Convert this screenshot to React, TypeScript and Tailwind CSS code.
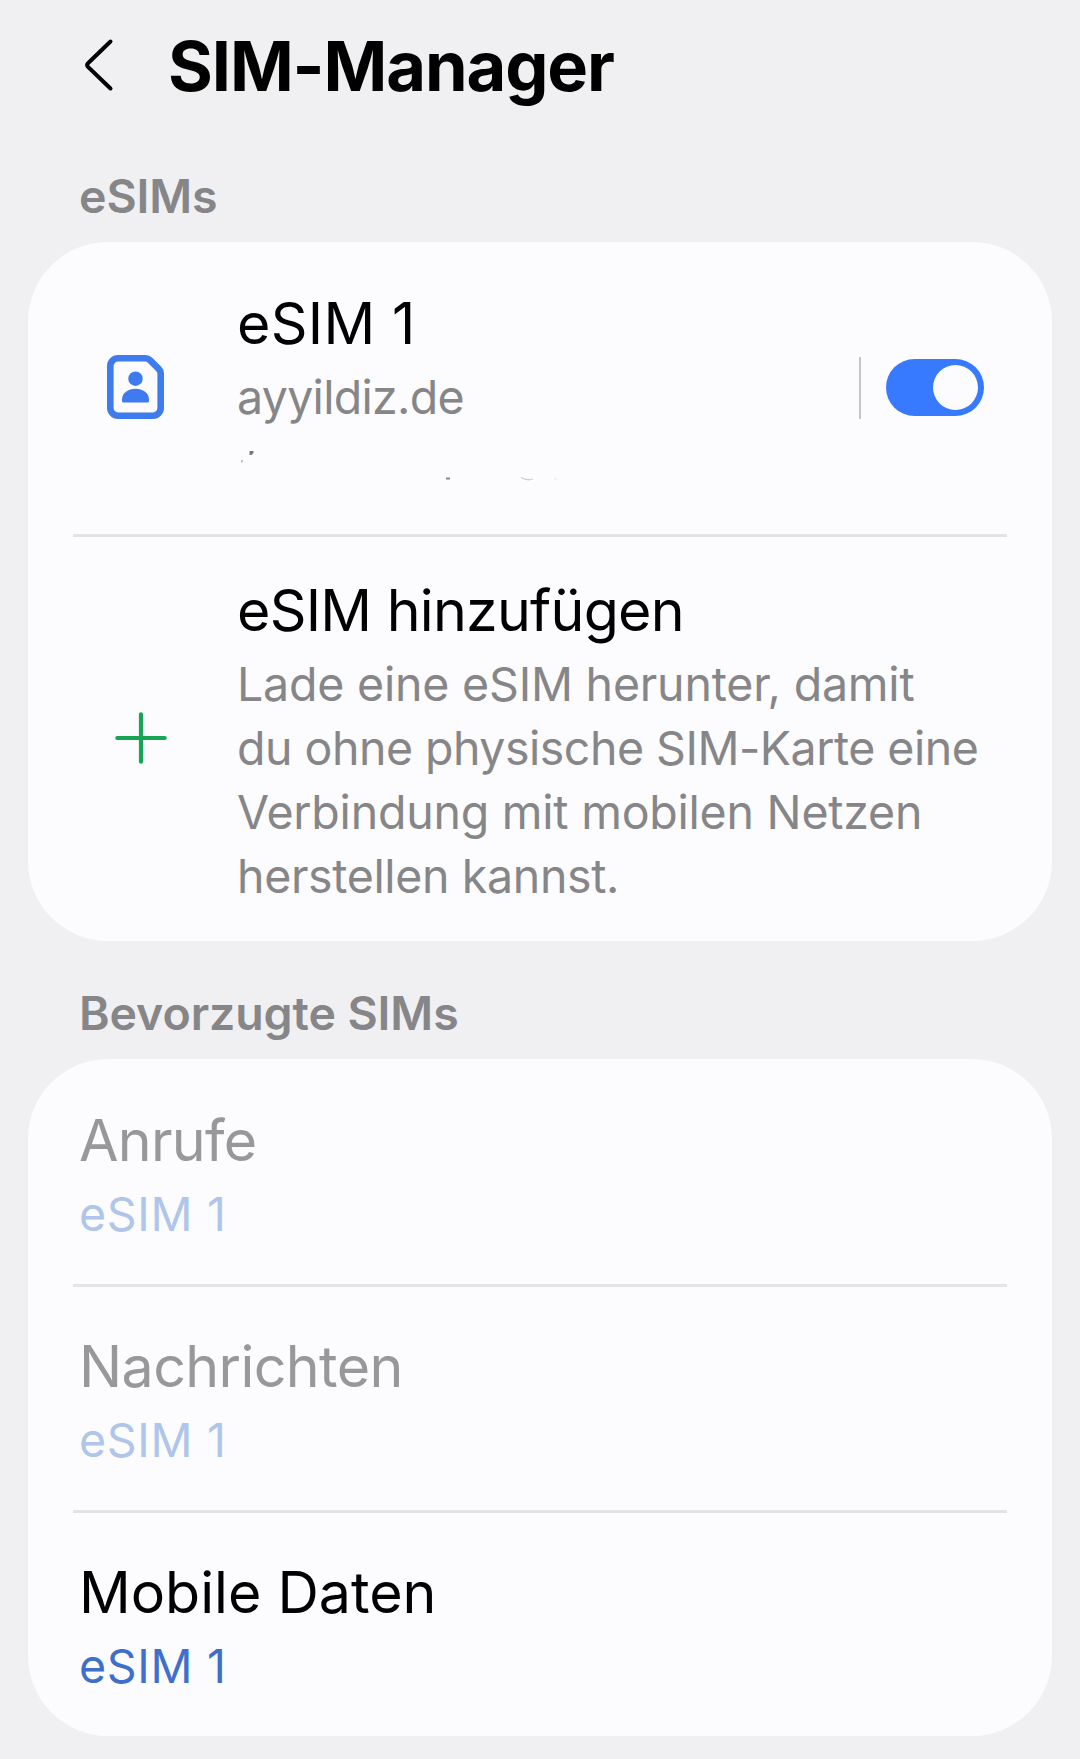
import type { ReactNode } from 'react';
import { clsx } from 'clsx';

interface PreferredSim {
  label: string;
  value: string;
  tracking?: string;
  disabled?: boolean;
}

const preferredSims: PreferredSim[] = [
  { label: 'Anrufe', value: 'eSIM 1', tracking: 'tracking-[-0.7px]', disabled: true },
  { label: 'Nachrichten', value: 'eSIM 1', tracking: 'tracking-[-0.6px]', disabled: true },
  { label: 'Mobile Daten', value: 'eSIM 1' },
];

const addEsimLines = [
  { text: 'Lade eine eSIM herunter, damit', tracking: 'tracking-[-0.2px]' },
  { text: 'du ohne physische SIM-Karte eine', tracking: 'tracking-[-0.5px]' },
  { text: 'Verbindung mit mobilen Netzen', tracking: 'tracking-[-0.23px]' },
  { text: 'herstellen kannst.', tracking: 'tracking-[-0.35px]' },
];

function BackIcon() {
  return (
    <svg width="30" height="56" viewBox="0 0 30 56" fill="none" aria-hidden="true">
      <path
        d="M26.5 4.5 4 26.2Q2.2 28 4 29.8L26.5 51.5"
        stroke="#000"
        strokeWidth="4"
        strokeLinecap="round"
      />
    </svg>
  );
}

function SimIcon() {
  return (
    <svg width="57" height="64" viewBox="0 0 57 64" aria-hidden="true">
      <path
        d="M11 3.3h27.5c1.7 0 3.2.6 4.4 1.8l9 9c1.2 1.2 1.8 2.7 1.8 4.4V53a7.7 7.7 0 0 1-7.7 7.7H11A7.7 7.7 0 0 1 3.3 53V11A7.7 7.7 0 0 1 11 3.3z"
        fill="none"
        stroke="#3d7bee"
        strokeWidth="6.6"
      />
      <circle cx="28.5" cy="23.7" r="7.2" fill="#3d7bee" />
      <path
        d="M15 44.5C15 38 21 33.7 28.500 33.7S42 38 42 44.5V46a1.5 1.5 0 0 1-1.5 1.5h-24A1.5 1.5 0 0 1 15 46z"
        fill="#3d7bee"
      />
    </svg>
  );
}

function PlusIcon() {
  return (
    <svg width="52" height="52" viewBox="0 0 52 52" aria-hidden="true">
      <path d="M26 2.3v47.4M2.3 26h47.4" stroke="#17a454" strokeWidth="4.2" strokeLinecap="round" />
    </svg>
  );
}

// Leftover marks of the blanked-out phone number
function RedactedNumber() {
  return (
    <svg className="block" width="320" height="59" viewBox="0 0 320 59" fill="none" aria-hidden="true">
      <path d="M12.500 22h4v2l-2 2h-2z" fill="#77777a" />
      <path d="M4 31.500h2.200l-1.500 2.500z" fill="#909093" />
      <path d="M209 49.500h4" stroke="#8a8a8c" strokeWidth="2" />
      <path d="M284 48.500q6 3.500 12 1.500" stroke="#d0d0d3" strokeWidth="1.300" />
      <path d="M317 50h3" stroke="#eaeaec" />
    </svg>
  );
}

function SectionTitle({ children, className }: { children: ReactNode; className?: string }) {
  return (
    <h2
      className={clsx(
        'pl-[79px] text-[46.5px] leading-[60px] font-semibold tracking-[-0.1px] text-[#868688]',
        className
      )}
    >
      {children}
    </h2>
  );
}

function Card({ children, className }: { children: ReactNode; className?: string }) {
  return <section className={clsx('mx-7 rounded-[80px] bg-[#fcfcfe]', className)}>{children}</section>;
}

function Divider() {
  return <div className="mx-[45px] h-[3px] bg-[#e4e4e6]" />;
}

export default function App() {
  return (
    <main className="h-[1759px] w-[1080px] overflow-hidden bg-[#f0f0f2] font-['Inter','Liberation_Sans',sans-serif] whitespace-nowrap">
      <header className="flex h-[130px] items-center pl-[84px]">
        <button aria-label="Zurück">
          <BackIcon />
        </button>
        <h1 className="ml-[54px] pt-[3px] text-[68.5px] leading-[84px] font-bold tracking-[-1.1px] text-black">
          SIM-Manager
        </h1>
      </header>

      <SectionTitle className="mt-[36px]">eSIMs</SectionTitle>
      <Card className="mt-[16px] h-[699px]">
        <div className="flex h-[292px] items-center pb-px">
          <div className="flex w-[209px] pb-px pl-[79px]">
            <SimIcon />
          </div>
          <div className="flex-1">
            <div className="text-[57.3px] leading-[70px] tracking-[0.3px] text-black">eSIM 1</div>
            <div className="mt-[7px] text-[46.5px] leading-[64px] tracking-[-0.7px] text-[#868688]">ayyildiz.de</div>
            <RedactedNumber />
          </div>
          <div className="mr-[25px] h-[62px] w-[2px] bg-[#c6c6ca]" />
          <button
            role="switch"
            aria-checked="true"
            aria-label="eSIM 1"
            className="mr-[68px] flex h-[57px] w-[98px] items-center justify-end rounded-full bg-[#387aff] pr-[6px]"
          >
            <span className="size-[45px] rounded-full bg-[#fcfcfe]" />
          </button>
        </div>
        <Divider />
        <div className="flex h-[404px]">
          <div className="flex w-[209px] items-center pb-[3px] pl-[87px]">
            <PlusIcon />
          </div>
          <div className="pt-[38px]">
            <div className="text-[57.3px] leading-[70px] tracking-[-0.75px] text-black">eSIM hinzufügen</div>
            <p className="mt-[7px] text-[46.5px] leading-[64px] text-[#868688]">
              {addEsimLines.map((line) => (
                <span key={line.text} className={clsx('block', line.tracking)}>
                  {line.text}
                </span>
              ))}
            </p>
          </div>
        </div>
      </Card>

      <SectionTitle className="mt-[42px]">Bevorzugte SIMs</SectionTitle>
      <Card className="mt-[16px] h-[677px] pt-[2px]">
        {preferredSims.map((sim, index) => (
          <div key={sim.label}>
            {index > 0 && <Divider />}
            <div className="h-[223px] pt-[44px] pl-[51px]">
              <div
                className={clsx(
                  'text-[57.3px] leading-[70px]',
                  sim.tracking,
                  sim.disabled ? 'text-[#98989a]' : 'text-black'
                )}
              >
                {sim.label}
              </div>
              <div
                className={clsx(
                  'mt-[7px] text-[46.5px] leading-[64px] tracking-[0.7px]',
                  sim.disabled ? 'text-[#b0c5ea]' : 'text-[#3f6fcb]'
                )}
              >
                {sim.value}
              </div>
            </div>
          </div>
        ))}
      </Card>
    </main>
  );
}
